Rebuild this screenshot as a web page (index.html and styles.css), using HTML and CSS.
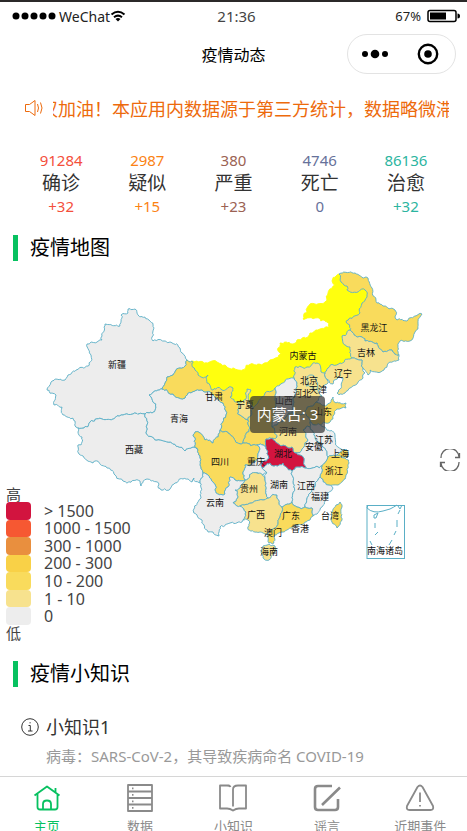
FILE: index.html
```html
<!DOCTYPE html>
<html lang="zh-CN">
<head>
<meta charset="utf-8">
<meta name="viewport" content="width=device-width, initial-scale=1">
<title>疫情动态</title>
<link rel="stylesheet" href="styles.css">
</head>
<body>
<div class="app">
  <div class="status">
    <div class="carrier">
      <svg class="signal" viewBox="0 0 44 8" aria-hidden="true"><circle cx="4" cy="4" r="3.5"/><circle cx="13" cy="4" r="3.5"/><circle cx="22" cy="4" r="3.5"/><circle cx="31" cy="4" r="3.5"/><circle cx="40" cy="4" r="3.5"/></svg>
      <span>WeChat</span>
      <svg class="wifi" viewBox="0 0 16 12" aria-hidden="true"><path d="M1.5 4.5Q8-1 14.5 4.5M4 7.3Q8 4 12 7.3"/><path class="solid" d="M5.5 9Q8 7 10.5 9L8 11.6Z"/></svg>
    </div>
    <time class="clock">21:36</time>
    <div class="power">
      <span>67%</span>
      <svg class="battery" viewBox="0 0 34 14" aria-hidden="true"><rect x="1" y="1.500" width="28" height="11" rx="2"/><path class="solid" d="M3 3.500H19V10.500H3ZM30.500 4.500Q33 4.500 33 7T30.500 9.500Z"/></svg>
    </div>
  </div>

  <header class="nav">
    <h1>疫情动态</h1>
    <div class="capsule">
      <button type="button" aria-label="更多"><svg viewBox="0 0 28 24" aria-hidden="true"><circle cx="4" cy="12" r="3"/><circle cx="14" cy="12" r="4.300"/><circle cx="24" cy="12" r="3"/></svg></button>
      <button type="button" aria-label="关闭"><svg viewBox="0 0 28 24" aria-hidden="true"><circle class="ring" cx="14" cy="12" r="9.200"/><circle cx="14" cy="12" r="3.800"/></svg></button>
    </div>
  </header>

  <main class="content">
    <div class="notice">
      <svg viewBox="0 0 20 18" aria-hidden="true"><path d="M1.500 5.500H5.500L11 1.500V16.500L5.500 12.500H1.500ZM13.500 5Q15.500 9 13.500 13M16.500 3.500Q19.500 9 16.500 14.500"/></svg>
      <p>武汉加油！本应用内数据源于第三方统计，数据略微滞后</p>
    </div>

    <dl class="stats">
      <div class="confirmed"><dd>91284</dd><dt>确诊</dt><dd>+32</dd></div>
      <div class="suspected"><dd>2987</dd><dt>疑似</dt><dd>+15</dd></div>
      <div class="severe"><dd>380</dd><dt>严重</dt><dd>+23</dd></div>
      <div class="dead"><dd>4746</dd><dt>死亡</dt><dd>0</dd></div>
      <div class="cured"><dd>86136</dd><dt>治愈</dt><dd>+32</dd></div>
    </dl>

    <h2>疫情地图</h2>
    <div class="map">
      <svg class="china" viewBox="0 261 467 400" role="img" aria-label="疫情地图">
        <g id="provinces" class="provinces"></g>
        <g class="islands">
          <rect x="367" y="505.500" width="37.500" height="53"/>
          <path d="M368 505L367 508Q373 514 383 511L390 509Q394 507 397 505M398 506L400 509L402 505M374 515L378 513L376 518L374 518ZM375 523V528M375 535L378 532M370 541L372 545M400 510L398 514M397 520V527M396 531L394 535M392 540L389 545M382 548L379 549"/>
        </g>
        <g class="labels">
          <text x="117" y="368">新疆</text><text x="134" y="453">西藏</text><text x="179" y="422">青海</text><text x="214" y="400">甘肃</text>
          <text x="303" y="359">内蒙古</text><text x="374" y="331">黑龙江</text><text x="366" y="356">吉林</text><text x="343" y="377">辽宁</text>
          <text x="309" y="384">北京</text><text x="318" y="393">天津</text><text x="302" y="397">河北</text><text x="284" y="404">山西</text>
          <text x="245" y="408">宁夏</text><text x="323" y="415">山东</text><text x="288" y="435">河南</text><text x="324" y="443">江苏</text>
          <text x="314" y="450">安徽</text><text x="340" y="457">上海</text><text x="283" y="457">湖北</text><text x="256" y="465">重庆</text>
          <text x="220" y="465">四川</text><text x="334" y="474">浙江</text><text x="279" y="488">湖南</text><text x="306" y="489">江西</text>
          <text x="320" y="500">福建</text><text x="249" y="492">贵州</text><text x="215" y="506">云南</text><text x="256" y="518">广西</text>
          <text x="291" y="519">广东</text><text x="300" y="532">香港</text><text x="273" y="536">澳门</text><text x="269" y="555">海南</text>
          <text x="330" y="519">台湾</text><text x="385" y="554">南海诸岛</text>
        </g>
      </svg>
      <div class="tooltip">内蒙古: 3</div>
      <button class="refresh" type="button" aria-label="还原"><svg viewBox="0 0 22 22" aria-hidden="true"><path d="M2 9A9 9 0 0 1 20 8M20 13A9 9 0 0 1 2 14M20.500 4V8.500H16M1.500 18V13.500H6"/></svg></button>
      <div class="legend">
        <span>高</span>
        <ul>
          <li class="l7">&gt; 1500</li><li class="l6">1000 - 1500</li><li class="l5">300 - 1000</li><li class="l4">200 - 300</li><li class="l3">10 - 200</li><li class="l2">1 - 10</li><li class="l1">0</li>
        </ul>
        <span>低</span>
      </div>
    </div>

    <h2>疫情小知识</h2>
    <article class="tip">
      <svg viewBox="0 0 18 18" aria-hidden="true"><circle cx="9" cy="9" r="8.300"/><path d="M7.500 7.500H9.300V13M7 13H11.500M8.500 4.800H9.700"/></svg>
      <h3>小知识1</h3>
      <p>病毒：SARS-CoV-2，其导致疾病命名 COVID-19</p>
    </article>
  </main>

  <nav class="tabs">
    <a href="#home" class="active"><svg viewBox="0 0 30 30" aria-hidden="true"><path d="M2.500 12.500L15 3.500L27.500 12.500M5.500 11V24Q5.500 26.500 8 26.500H23Q25.500 26.500 25.500 24V11M23.500 9V5M11 26V21Q11 17.500 15 17.500T19 21V26"/></svg>主页</a>
    <a href="#data"><svg viewBox="0 0 30 30" aria-hidden="true"><path d="M3 2H27V28H3ZM3 8.500H27M3 15H27M3 21.500H27M7 5.300H8.500M7 11.800H8.500M7 18.300H8.500M7 24.800H8.500"/></svg>数据</a>
    <a href="#tips"><svg viewBox="0 0 30 30" aria-hidden="true"><path d="M11.500 2.500H2V25.500H9Q12 25.500 15 27.500Q18 25.500 21 25.500H28V2.500H20Q15 2.500 15 6.500V23.500M9 2.500Q12 2.500 12.500 4"/></svg>小知识</a>
    <a href="#rumors"><svg class="heavy" viewBox="0 0 30 30" aria-hidden="true"><path d="M20 3H6Q3 3 3 6V24Q3 27 6 27H23Q26 27 26 24V16M28 4.500L10 22"/></svg>谣言</a>
    <a href="#events"><svg viewBox="0 0 30 30" aria-hidden="true"><path d="M12.500 4Q15 1 17.500 4L28 23Q29 27 25.500 27H4.500Q1 27 2 23ZM15 9.500V19M15 22V23.500"/></svg>近期事件</a>
  </nav>
</div>
<script src="map.js"></script>
</body>
</html>
```

FILE: styles.css
```css
* { box-sizing: border-box; }

body {
  margin: 0;
  background: #fff;
  color: #333;
  font-family: "Noto Sans", "Noto Sans CJK SC", sans-serif;
  font-size: 15px;
}

h1, h2, h3, p, dl, dd, ul { margin: 0; padding: 0; font-weight: 400; }
svg { display: block; }
button { padding: 0; border: 0; background: none; }

.app {
  display: flex;
  flex-direction: column;
  height: 100vh;
  border-top: 2px solid #2b2929;
}

.status {
  display: grid;
  grid-template-columns: 1fr auto 1fr;
  align-items: center;
  height: 28px;
  padding: 0 6px 0 12px;
  font-size: 14px;
  color: #222;
}
.carrier, .power { display: flex; align-items: center; }
.carrier { gap: 3px; }
.carrier span { margin-right: -3px; }
.clock { font-size: 15px; color: #444; }
.signal { width: 44px; height: 8px; }
.wifi { width: 16px; height: 12px; fill: none; stroke: #000; stroke-width: 2; }
.solid { fill: #000; stroke: none; }
.power { justify-content: flex-end; gap: 6px; font-size: 13px; }
.battery { width: 34px; height: 14px; fill: none; stroke: #000; stroke-width: 1.5; }

.nav {
  display: grid;
  grid-template-columns: 1fr auto 1fr;
  align-items: center;
  height: 48px;
  padding: 0 11px;
  color: #000;
}
.nav h1 { grid-column: 2; font-size: 16px; }
.capsule {
  display: flex;
  justify-self: end;
  justify-content: space-around;
  align-items: center;
  width: 109px;
  height: 40px;
  border: 1px solid #e3e3e3;
  border-radius: 20px;
}
.capsule svg { width: 28px; height: 24px; }
.ring { fill: none; stroke: #000; stroke-width: 2.4; }

.content { flex: 1; min-height: 0; overflow: hidden; }

.notice {
  display: flex;
  align-items: center;
  gap: 9px;
  height: 59px;
  padding: 0 18px 0 24px;
  color: #ed6a0c;
}
.notice svg { flex: none; width: 20px; height: 18px; fill: none; stroke: currentColor; }
.notice p { flex: 1; overflow: hidden; white-space: nowrap; font-size: 18px; text-indent: -31px; }

.stats {
  display: grid;
  grid-template-columns: repeat(5, 1fr);
  padding: 12px 18px 18px;
  text-align: center;
  line-height: 22px;
}
.stats dt { font-size: 19px; line-height: 24px; color: #333; }
.confirmed { color: #f44f3c; }
.suspected { color: #fb8213; }
.severe { color: #9b6253; }
.dead { color: #66719a; }
.cured { color: #2cb5a0; }

h2 {
  margin: 0 13px;
  padding-left: 12px;
  border-left: 5px solid #07c160;
  font-size: 20px;
  line-height: 26px;
  color: #000;
}

.map { position: relative; }
.china { width: 100%; height: auto; }
.provinces path { stroke: #5aafc6; stroke-width: .9; stroke-linejoin: round; }
.provinces .hover { stroke: #ffff0e; }
.islands { fill: none; stroke: #5aafc6; stroke-width: 1; }
.labels { font-size: 9px; text-anchor: middle; fill: #111; }

.tooltip {
  position: absolute;
  left: 53.5%;
  top: 33.8%;
  padding: 7px;
  border-radius: 4px;
  background: rgba(50, 50, 50, .7);
  color: #fff;
  line-height: 23px;
  white-space: nowrap;
}
.refresh { position: absolute; right: 6px; top: 47%; }
.refresh svg { width: 22px; height: 22px; fill: none; stroke: #666; stroke-width: 1.3; }

.legend { position: absolute; left: 6px; bottom: 20px; line-height: 16px; color: #444; }
.legend span { display: block; }
.legend ul {
  display: grid;
  grid-template-rows: repeat(7, 1fr);
  height: 123px;
  list-style: none;
  font-size: 16px;
}
.legend li { display: flex; align-items: center; gap: 13px; line-height: 16px; }
.legend li::before { content: ""; width: 25px; height: 100%; border-radius: 4px; background: #ededed; }
.legend .l7::before { background: #d2143f; }
.legend .l6::before { background: #f65832; }
.legend .l5::before { background: #e98f3e; }
.legend .l4::before { background: #f9d147; }
.legend .l3::before { background: #f9db5c; }
.legend .l2::before { background: #f7e28e; }

.tip {
  display: grid;
  grid-template-columns: 18px 1fr;
  column-gap: 7px;
  align-items: center;
  padding: 26px 21px;
}
.tip svg { width: 18px; height: 18px; fill: none; stroke: #333; }
.tip h3 { font-size: 18px; line-height: 28px; }
.tip p { grid-column: 2; line-height: 30px; color: #999; }

.tabs {
  display: grid;
  grid-template-columns: repeat(5, 1fr);
  height: 55px;
  overflow: hidden;
  border-top: 1px solid #d6d6d6;
}
.tabs a {
  display: flex;
  flex-direction: column;
  align-items: center;
  gap: 3px;
  padding-top: 6px;
  font-size: 13px;
  color: #8a8a8a;
  text-decoration: none;
}
.tabs svg { flex: none; width: 30px; height: 30px; fill: none; stroke: currentColor; stroke-width: 1.8; stroke-linejoin: round; }
.tabs .heavy { stroke-width: 2.6; }
.tabs .active { color: #07c160; }
```

FILE: map.js
```javascript
// Province outlines: fill level, then a ring of x,y pairs.
const NONE = '#ededed', LOW = '#f7e28e', MID = '#f9db5c', TOP = '#d2143f', HOVER = '#ffff0e';
const provinces = [
  [HOVER, '187,360 192,361 217,362 226,366 238,370 253,364 268,362 282,353 278,348 280,343 293,344 297,340 308,337 310,333 320,329 330,328 327,322 315,318 303,319 310,304 325,302 328,293 335,285 332,281 336,276 339,274 341,282 347,286 350,292 365,290 367,295 362,303 360,313 346,322 350,330 342,336 343,343 350,347 352,358 340,363 328,368 325,373 321,372 317,363 307,367 295,367 294,378 280,385 275,388 265,393 258,403 253,408 243,404 235,402 230,397 233,388 213,390 207,383 208,375 201,377 195,370'],
  [NONE, '128,309 135,309 140,317 149,320 154,328 152,337 153,341 170,342 180,348 182,353 187,360 185,366 180,368 173,375 167,377 162,389 149,395 153,402 156,407 152,413 145,414 123,415 113,419 102,419 90,422 84,428 78,428 75,421 63,415 62,407 54,405 56,395 47,390 51,382 60,379 65,380 68,375 88,366 91,355 87,344 102,340 105,324 120,326 121,315 128,313'],
  [NONE, '145,414 123,415 113,419 102,419 90,422 84,428 78,428 78,432 82,437 81,445 78,445 79,454 93,463 95,461 107,468 115,475 123,481 140,481 141,486 147,479 159,484 161,490 170,489 175,483 183,479 192,482 194,478 200,483 203,473 200,458 198,450 193,447 185,451 173,444 157,440 146,433 147,425'],
  [NONE, '162,389 149,395 153,402 156,407 152,413 145,414 147,425 146,433 157,440 173,444 185,451 193,447 198,450 193,435 195,432 200,433 205,440 213,443 220,430 226,415 223,403 213,395 205,392 192,392 185,398 173,394'],
  [MID, '187,360 192,361 195,370 201,377 208,375 207,383 213,390 233,388 230,397 235,402 239,403 240,415 248,420 250,428 243,443 235,440 228,433 220,430 226,415 223,403 213,395 205,392 192,392 185,398 173,394 162,389 167,377 173,375 180,368 185,366'],
  [MID, '275,388 275,400 272,427 277,437 266,439 266,447 257,445 243,443 250,428 248,420 253,408 258,403 265,393'],
  [LOW, '247,389 251,390 249,400 253,408 248,420 240,415 239,403 244,400'],
  [MID, '339,274 355,273 368,278 372,288 377,303 383,306 395,310 397,320 407,321 415,316 422,314 418,323 415,332 410,341 400,341 399,355 392,350 383,352 377,343 365,341 362,337 352,332 350,330 346,322 360,313 362,303 367,295 365,290 350,292 347,286 341,282'],
  [LOW, '342,336 350,330 352,332 362,337 365,341 377,343 383,352 392,350 399,355 399,360 390,362 382,371 370,370 368,375 363,368 362,360 352,358 350,347 343,343'],
  [LOW, '352,358 362,360 363,368 365,373 363,378 350,388 345,393 337,393 343,378 338,377 333,384 325,377 325,373 328,368 340,363'],
  [LOW, '295,367 307,367 317,363 321,372 325,373 325,377 328,383 322,388 318,390 322,396 316,402 305,413 298,415 292,413 293,400 297,387 294,378'],
  [LOW, '307,378 312,375 316,380 318,388 313,390 313,386 306,386'],
  [NONE, '275,388 280,385 294,378 297,387 293,400 292,413 277,425 272,427 275,400'],
  [MID, '305,413 316,402 327,405 333,397 336,403 346,403 346,408 338,409 330,422 315,425 310,422'],
  [LOW, '292,413 298,415 305,413 310,422 310,427 303,430 308,440 303,448 295,453 292,447 277,443 272,438 277,437 272,427 277,425'],
  [NONE, '310,422 315,425 325,427 335,435 338,447 347,450 337,455 328,457 323,447 315,438 310,427'],
  [NONE, '303,430 310,427 315,438 323,447 328,457 322,466 306,468 303,457 295,453 303,448 308,440'],
  [MID, '337,455 347,450 348,457 340,458'],
  [MID, '328,457 337,455 345,458 349,463 346,475 338,485 328,485 320,477 322,466'],
  [MID, '193,435 195,432 200,433 205,440 213,443 220,430 228,433 235,440 243,443 257,445 260,449 258,455 255,462 245,465 243,472 245,480 235,480 230,477 228,487 225,494 220,495 213,482 208,475 203,473 200,458 198,450'],
  [NONE, '266,447 267,450 269,458 263,462 262,468 267,473 263,475 252,473 245,480 243,472 245,465 255,462 258,455 260,449 257,445'],
  [LOW, '245,480 252,473 260,473 265,480 266,492 268,498 263,500 252,503 240,506 233,503 238,497 235,490 240,488'],
  [NONE, '203,473 208,475 213,482 220,495 225,494 228,487 230,477 235,480 245,480 240,488 235,490 238,497 233,503 240,506 246,512 243,520 242,522 230,523 220,527 219,536 213,532 208,532 202,520 194,509 201,498 200,483'],
  [LOW, '240,506 252,503 263,500 268,498 277,495 282,507 280,517 275,528 265,534 257,532 248,527 248,520 243,520 246,512'],
  [NONE, '262,468 270,463 277,466 283,463 292,471 293,477 293,493 292,502 282,507 277,495 268,498 266,492 265,480 267,473'],
  [NONE, '292,471 300,467 306,468 322,466 320,477 315,483 310,493 305,507 297,507 292,502 293,493 293,477'],
  [NONE, '320,477 328,485 333,488 328,498 322,507 313,516 312,508 305,507 310,493 315,483'],
  [MID, '282,507 292,502 297,507 305,507 312,508 313,516 310,520 293,527 283,532 275,535 274,543 269,543 268,535 275,528 280,517'],
  [LOW, '263,546 269,544 275,546 275,552 269,560 263,558 261,552'],
  [MID, '340,502 342,507 341,517 337,528 332,522 332,515 336,505'],
  [TOP, '266,439 272,438 277,443 292,447 295,453 303,457 306,468 300,467 292,471 283,463 277,466 270,463 262,468 263,462 269,458 267,450 266,447']
];

// Splits an edge into short irregular steps. The offset depends only on the
// midpoint, so neighbouring provinces get the same border.
function roughen(a, b) {
  const dx = b[0] - a[0], dy = b[1] - a[1], length = Math.hypot(dx, dy);
  if (length < 2.8) return [b];
  const mx = (a[0] + b[0]) / 2, my = (a[1] + b[1]) / 2;
  const noise = seed => {
    const v = Math.sin(mx * 12.9898 + my * 78.233 + seed) * 43758.5453;
    return v - Math.floor(v) - 0.5;
  };
  const size = Math.min(3.4, length * 0.5);
  const mid = [mx + noise(1) * size, my + noise(2) * size];
  return [...roughen(a, mid), ...roughen(mid, b)];
}

const layer = document.getElementById('provinces');
for (const [fill, ring] of provinces) {
  const points = ring.split(' ').map(pair => pair.split(',').map(Number));
  const outline = points.flatMap((p, i) => roughen(p, points[(i + 1) % points.length]));
  const path = document.createElementNS('http://www.w3.org/2000/svg', 'path');
  path.setAttribute('d', 'M' + outline.map(p => p[0].toFixed(1) + ' ' + p[1].toFixed(1)).join('L') + 'Z');
  path.setAttribute('fill', fill);
  if (fill === HOVER) path.setAttribute('class', 'hover');
  layer.appendChild(path);
}
```
